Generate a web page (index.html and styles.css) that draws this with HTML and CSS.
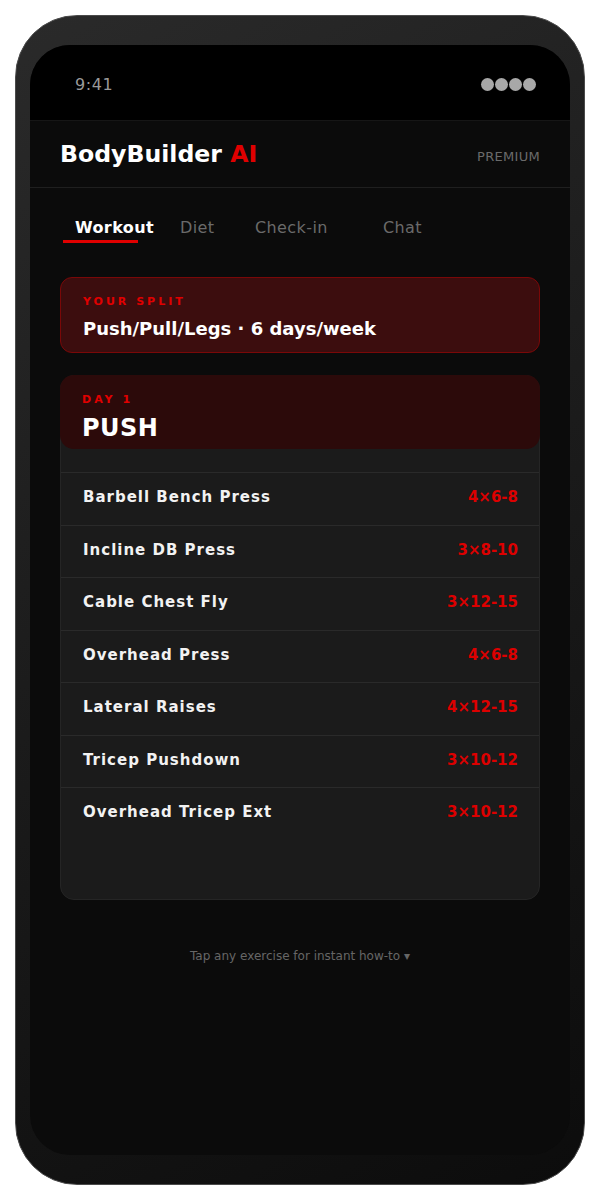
FILE: index.html
```html
<!DOCTYPE html>
<html>
<head>
<meta charset="utf-8">
<link rel="stylesheet" href="styles.css">
</head>
<body>
<div class="phone">
  <div class="screen">
    <div class="status">
      <span class="time">9:41</span>
      <span class="dots"><i></i><i></i><i></i><i></i></span>
    </div>
    <header class="appbar">
      <h1 class="brand">BodyBuilder <span class="red">AI</span></h1>
      <span class="premium">PREMIUM</span>
    </header>
    <nav class="tabs">
      <span class="tab active">Workout</span>
      <span class="tab">Diet</span>
      <span class="tab">Check-in</span>
      <span class="tab">Chat</span>
    </nav>
    <section class="split">
      <div class="label">YOUR SPLIT</div>
      <div class="split-value">Push/Pull/Legs · 6 days/week</div>
    </section>
    <section class="day">
      <div class="day-head">
        <div class="label">DAY 1</div>
        <div class="day-title">PUSH</div>
      </div>
      <ul class="rows">
        <li class="row"><span class="ex">Barbell Bench Press</span><span class="reps">4×6-8</span></li>
        <li class="row"><span class="ex">Incline DB Press</span><span class="reps">3×8-10</span></li>
        <li class="row"><span class="ex">Cable Chest Fly</span><span class="reps">3×12-15</span></li>
        <li class="row"><span class="ex">Overhead Press</span><span class="reps">4×6-8</span></li>
        <li class="row"><span class="ex">Lateral Raises</span><span class="reps">4×12-15</span></li>
        <li class="row"><span class="ex">Tricep Pushdown</span><span class="reps">3×10-12</span></li>
        <li class="row"><span class="ex">Overhead Tricep Ext</span><span class="reps">3×10-12</span></li>
      </ul>
    </section>
    <p class="hint">Tap any exercise for instant how-to ▾</p>
  </div>
</div>
</body>
</html>
```

FILE: styles.css
```css
* { box-sizing: border-box; }
html, body { margin: 0; padding: 0; background: #fff; }
body { font-family: "DejaVu Sans", sans-serif; }

.phone {
  width: 570px;
  height: 1170px;
  margin: 15px 0 0 15px;
  padding: 29px 14px 29px 14px;
  border-radius: 62px;
  border: 1px solid #4a4a4a;
  background: linear-gradient(150deg, #2a2a2a 0%, #1c1c1c 45%, #0c0c0c 100%);
}
.screen {
  height: 1110px;
  border-radius: 40px;
  background: #0b0b0b;
  overflow: hidden;
}
.status {
  height: 75px;
  background: #000;
  display: flex;
  align-items: center;
  justify-content: space-between;
  padding: 4px 34px 0 45px;
}
.time { color: #9a9a9a; font-size: 16px; letter-spacing: 0.6px; }
.dots { display: flex; gap: 1px; }
.dots i { width: 13px; height: 13px; border-radius: 50%; background: #a8a8a8; display: block; }

.appbar {
  height: 68px;
  border-top: 1px solid #161616;
  border-bottom: 1px solid #1f1f1f;
  display: flex;
  align-items: center;
  justify-content: space-between;
  padding: 0 30px;
}
.brand { margin: 0; color: #fff; font-size: 23.6px; font-weight: bold; }
.red { color: #e00000; }
.premium { color: #6a6a6a; font-size: 13px; letter-spacing: 0.3px; padding-top: 5px; }

.tabs {
  display: grid;
  grid-template-columns: 105px 75px 128px auto;
  padding: 30px 0 0 45px;
  height: 89px;
}
.tab { color: #6a6a6a; font-size: 16px; letter-spacing: 0.4px; position: relative; height: 25px; }
.tab.active { color: #fff; font-weight: bold; }
.tab.active::after {
  content: "";
  position: absolute;
  left: -12px;
  top: 22px;
  width: 75px;
  height: 3px;
  background: #e00000;
}

.label { color: #e00000; font-size: 11px; font-weight: bold; letter-spacing: 3px; }

.split {
  margin: 0 30px;
  height: 76px;
  border-radius: 12px;
  border: 1px solid #7a0808;
  background: #3c0d0e;
  padding: 17px 22px 0;
}
.split-value { color: #fff; font-size: 18px; font-weight: bold; margin-top: 10px; }

.day {
  margin: 22px 30px 0;
  height: 525px;
  border-radius: 14px;
  border: 1px solid #252525;
  background: #1b1b1b;
}
.day-head {
  height: 74px;
  border-radius: 14px;
  background: #2c0a0a;
  padding: 18px 22px 0;
  margin: -1px -1px 0;
}
.day-title { color: #fff; font-size: 24px; font-weight: bold; letter-spacing: 0.5px; margin-top: 8px; }

.rows { list-style: none; margin: 23px 0 0; padding: 0; }
.row {
  height: 52.5px;
  border-top: 1px solid #2a2a2a;
  display: flex;
  align-items: center;
  justify-content: space-between;
  padding: 0 21px 3px 22px;
}
.ex { color: #f2f2f2; font-size: 15px; font-weight: bold; letter-spacing: 1px; }
.reps { color: #dd0000; font-size: 15px; font-weight: bold; }

.hint {
  margin: 49px 0 0;
  text-align: center;
  color: #666;
  font-size: 12px;
}
```
